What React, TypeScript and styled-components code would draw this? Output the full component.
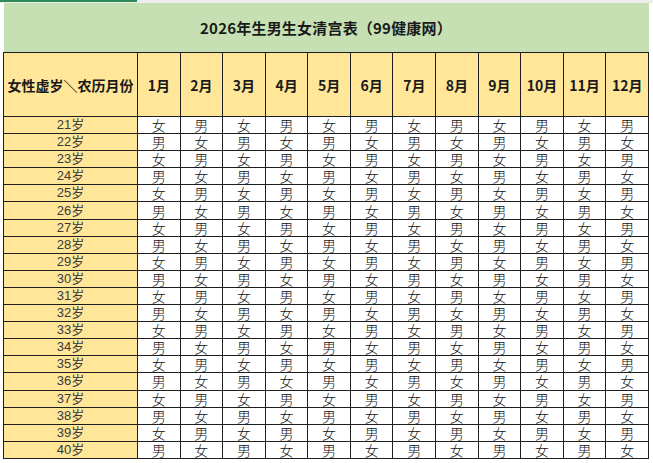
import React from "react";
import styled, {createGlobalStyle} from "styled-components";

const GlobalStyle = createGlobalStyle`
    html, body {
        margin: 0;
        padding: 0;
        background: #ffffff;
    }
    body {
        font-family: "Noto Sans CJK SC", "Liberation Sans", sans-serif;
    }
`;

const TopStrip = styled.div`
    display: flex;
    height: 3px;
    background-color: #ececec;
`;

const SelectedTab = styled.div`
    width: 137px;
    height: 2px;
    background-color: #2e8b57;
`;

const Sheet = styled.div`
    padding-left: 3px;
`;

const Table = styled.table`
    width: 646px;
    border-collapse: collapse;
    table-layout: fixed;
`;

const TitleCell = styled.th`
    height: 49px;
    padding: 0;
    background-color: #c6e0b4;
    border-bottom: 1px solid #1e1e1e;
    font-size: 15px;
    font-weight: 700;
    color: #1a1a1a;
    text-align: center;
    letter-spacing: 0.2px;
`;

const HeadCell = styled.th<{$wide?: boolean}>`
    height: 63px;
    padding: 0;
    background-color: #ffe699;
    border: 1px solid #1e1e1e;
    font-size: ${(p) => (p.$wide ? "14px" : "14px")};
    font-weight: 700;
    color: #1a1a1a;
    text-align: center;
    white-space: nowrap;
    overflow: hidden;
`;

const AgeCell = styled.td`
    height: 16.1px;
    padding: 0;
    background-color: #ffe699;
    border: 1px solid #1e1e1e;
    font-family: "Liberation Sans", "Noto Sans CJK SC", sans-serif;
    font-size: 13px;
    line-height: 16px;
    color: #3a3a3a;
    text-align: center;
`;

const GenderCell = styled.td`
    height: 16.1px;
    padding: 0;
    background-color: #ffffff;
    border: 1px solid #1e1e1e;
    font-family: "Noto Sans CJK SC", sans-serif;
    font-size: 14px;
    font-weight: 300;
    line-height: 16px;
    color: #111111;
    text-align: center;
`;

const months = Array.from({length: 12}, (_, i) => `${i + 1}月`);
const ages = Array.from({length: 20}, (_, i) => 21 + i);

export default function App(): JSX.Element {
    return (
        <>
            <GlobalStyle />
            <TopStrip>
                <SelectedTab />
            </TopStrip>
            <Sheet>
                <Table>
                    <colgroup>
                        <col style={{width: 134}} />
                        {months.map((m) => (
                            <col key={m} />
                        ))}
                    </colgroup>
                    <thead>
                        <tr>
                            <TitleCell colSpan={13}>2026年生男生女清宫表（99健康网）</TitleCell>
                        </tr>
                        <tr>
                            <HeadCell $wide>女性虚岁＼农历月份</HeadCell>
                            {months.map((m) => (
                                <HeadCell key={m}>{m}</HeadCell>
                            ))}
                        </tr>
                    </thead>
                    <tbody>
                        {ages.map((age, i) => (
                            <tr key={age}>
                                <AgeCell>{age}岁</AgeCell>
                                {months.map((m, j) => (
                                    <GenderCell key={m}>{(i + j) % 2 === 0 ? "女" : "男"}</GenderCell>
                                ))}
                            </tr>
                        ))}
                    </tbody>
                </Table>
            </Sheet>
        </>
    );
}
